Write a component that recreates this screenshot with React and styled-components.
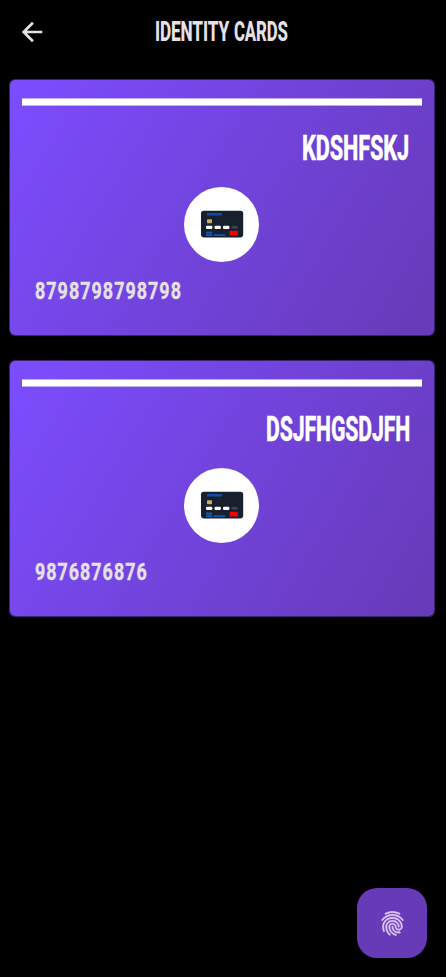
import React, { useLayoutEffect, useRef, useState } from "react";
import styled, { createGlobalStyle } from "styled-components";
import { MdFingerprint } from "react-icons/md";

const GlobalStyle = createGlobalStyle`
  * { box-sizing: border-box; }
  body { margin: 0; background: #000; }
`;

const Screen = styled.main`
  display: flex;
  flex-direction: column;
  height: 977px;
  width: 446px;
  background: #000;
  overflow: hidden;
  font-family: Roboto, "Liberation Sans", sans-serif;
`;

const TopBar = styled.header`
  display: grid;
  grid-template-columns: 64px 1fr 62px;
  align-items: center;
  height: 63px;
  flex: none;
`;

const BackButton = styled.button`
  display: flex;
  justify-content: center;
  padding: 0;
  border: 0;
  background: none;
  color: #e6e1e5;
`;

const Title = styled.h1`
  display: flex;
  justify-content: center;
  align-items: center;
  gap: 5px;
  margin: 0 0 0 -5px;
  color: #e6e1e5;
`;

const CardList = styled.section`
  display: flex;
  flex-direction: column;
  gap: 24px;
  padding: 16px 11px 0 9px;
  flex: 1;
`;

const CardPanel = styled.article`
  display: flex;
  flex-direction: column;
  height: 257px;
  padding: 18px 12px 0;
  border: 1px solid rgba(115, 68, 219, 0.5);
  border-radius: 6px;
  background: linear-gradient(121.1deg, #7c4dff, #673ab7) padding-box;
`;

const Stripe = styled.div`
  height: 8px;
  border: solid rgba(255, 255, 255, 0.55);
  border-width: 1px 0;
  background: #fff padding-box;
  flex: none;
`;

const HolderRow = styled.div`
  display: flex;
  justify-content: flex-end;
  margin-top: 24px;
  padding-right: 12.5px;
  height: 36px;
  align-items: center;
  color: #fff;
`;

const Emblem = styled.div`
  display: flex;
  align-items: center;
  justify-content: center;
  align-self: center;
  width: 75px;
  height: 75px;
  margin: 21px 0.4px 0 0;
  padding-bottom: 1px;
  border-radius: 50%;
  background: #fff;
  flex: none;
`;

const NumberRow = styled.div`
  display: flex;
  align-items: center;
  height: 30px;
  margin-top: 14px;
  padding-left: 12.5px;
  color: #e6e1e5;
`;

const ActionBar = styled.footer`
  display: flex;
  justify-content: flex-end;
  padding: 0 19px 19px 0;
`;

const FingerprintButton = styled.button`
  display: flex;
  align-items: center;
  justify-content: center;
  width: 70px;
  height: 70px;
  padding: 0;
  border: 0;
  border-radius: 20px;
  background: #673ab7;
  color: #e3cdfb;

  path:not([fill="none"]) {
    stroke: currentColor;
    stroke-width: 0.5px;
  }
`;

const FitBox = styled.span`
  display: block;
  width: ${(p) => p.$width}px;
  height: ${(p) => p.$size}px;
  line-height: ${(p) => p.$size}px;
  font-size: ${(p) => p.$size}px;
  font-weight: ${(p) => p.$weight};
  letter-spacing: ${(p) => p.$tracking}px;
  white-space: nowrap;
  -webkit-text-stroke: ${(p) => p.$stroke}px currentColor;
`;

const FitInk = styled.span`
  display: inline-block;
  transform-origin: 0 50%;
`;

/* Condenses a run of text horizontally to the given width. */
function CondensedText({ width, size, weight = 800, tracking = 0, stroke = 0, children }) {
  const ref = useRef(null);
  const [scale, setScale] = useState(1);
  useLayoutEffect(() => {
    setScale(width / (ref.current.offsetWidth - tracking));
  }, [width, size, weight, tracking, children]);
  return (
    <FitBox $width={width} $size={size} $weight={weight} $tracking={tracking} $stroke={stroke}>
      <FitInk ref={ref} style={{ transform: `scaleX(${scale})` }}>
        {children}
      </FitInk>
    </FitBox>
  );
}

function ArrowIcon() {
  return (
    <svg width="22" height="22" viewBox="0 0 22 22" fill="none" stroke="currentColor" strokeWidth="2.7">
      <path d="M21.3 11H3.3M11.9 1.8L2.7 11l9.2 9.2" />
    </svg>
  );
}

function BankCardIcon() {
  return (
    <svg width="44" height="28" viewBox="0 0 44 28">
      <rect x="1" y="0.8" width="42.2" height="26.6" rx="2.8" fill="#17202c" />
      <rect x="7" y="3" width="15" height="2.4" rx="0.5" fill="#0d4fa8" />
      <rect x="7" y="9.2" width="5" height="4" rx="0.8" fill="#c9b262" />
      <g fill="#fff">
        <rect x="6" y="15.8" width="6.4" height="3.2" rx="1.2" />
        <rect x="14.5" y="15.8" width="6.4" height="3.2" rx="1.2" />
        <rect x="23" y="15.8" width="6.4" height="3.2" rx="1.2" />
      </g>
      <rect x="31.4" y="15.8" width="6.4" height="3" rx="1.2" fill="#3a424d" />
      <rect x="6" y="21.6" width="6.2" height="1.9" fill="#0b5fc4" />
      <rect x="6" y="24.2" width="6.2" height="1.9" fill="#0b5fc4" />
      <rect x="13.8" y="24.2" width="11.6" height="1.8" fill="#0d54b0" />
      <rect x="29.6" y="20.8" width="8.2" height="4.8" rx="0.6" fill="#f80000" />
    </svg>
  );
}

const cards = [
  { name: "KDSHFSKJ", nameWidth: 107.5, number: "8798798798798", numberWidth: 146 },
  { name: "DSJFHGSDJFH", nameWidth: 144, number: "9876876876", numberWidth: 112 },
];

function IdentityCard({ card }) {
  return (
    <CardPanel>
      <Stripe />
      <HolderRow>
        <CondensedText width={card.nameWidth} size={35} weight={800} tracking={-0.2} stroke={0.3}>
          {card.name}
        </CondensedText>
      </HolderRow>
      <Emblem>
        <BankCardIcon />
      </Emblem>
      <NumberRow>
        <CondensedText width={card.numberWidth} size={24.5} weight={700} tracking={1.4} stroke={0.4}>
          {card.number}
        </CondensedText>
      </NumberRow>
    </CardPanel>
  );
}

export default function App() {
  return (
    <Screen>
      <GlobalStyle />
      <TopBar>
        <BackButton aria-label="Back">
          <ArrowIcon />
        </BackButton>
        <Title>
          <CondensedText width={74.5} size={28} weight={800} tracking={-0.2}>IDENTITY</CondensedText>
          <CondensedText width={54} size={28} weight={800} tracking={-0.2}>CARDS</CondensedText>
        </Title>
      </TopBar>
      <CardList>
        {cards.map((card) => (
          <IdentityCard key={card.number} card={card} />
        ))}
      </CardList>
      <ActionBar>
        <FingerprintButton aria-label="Unlock with fingerprint">
          <MdFingerprint size={29} />
        </FingerprintButton>
      </ActionBar>
    </Screen>
  );
}
